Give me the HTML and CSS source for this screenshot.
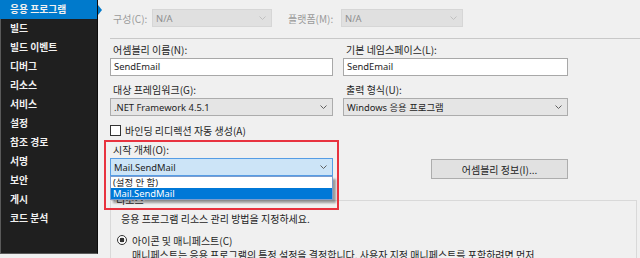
FILE: index.html
```html
<html>
<head>
  <meta charset="utf-8">
  <link rel="stylesheet" href="styles.css">
</head>
<body>
  <div class="page">
    <ul class="side-nav">
      <li class="side-nav_item side-nav_item--active">응용 프로그램</li>
      <li class="side-nav_item">빌드</li>
      <li class="side-nav_item">빌드 이벤트</li>
      <li class="side-nav_item">디버그</li>
      <li class="side-nav_item">리소스</li>
      <li class="side-nav_item">서비스</li>
      <li class="side-nav_item">설정</li>
      <li class="side-nav_item">참조 경로</li>
      <li class="side-nav_item">서명</li>
      <li class="side-nav_item">보안</li>
      <li class="side-nav_item">게시</li>
      <li class="side-nav_item">코드 분석</li>
    </ul>

    <div class="props">
      <!-- 구성 / 플랫폼 -->
      <div class="props_config">
        <span class="props_config-label">구성(C):</span>
        <div class="combo combo--disabled props_config-combo">
          <span>N/A</span>
          <svg class="combo_arrow" width="7" height="4" viewBox="0 0 7 4"><polyline points="0.5,0.5 3.5,3.5 6.5,0.5" fill="none" stroke="#c0c0c0" stroke-width="1"/></svg>
        </div>
        <span class="props_config-label props_config-label--platform">플랫폼(M):</span>
        <div class="combo combo--disabled props_config-combo props_config-combo--platform">
          <span>N/A</span>
          <svg class="combo_arrow" width="7" height="4" viewBox="0 0 7 4"><polyline points="0.5,0.5 3.5,3.5 6.5,0.5" fill="none" stroke="#c0c0c0" stroke-width="1"/></svg>
        </div>
      </div>
      <div class="props_separator"></div>

      <div class="props_row props_row--first">
        <div class="field">
          <div class="field_label">어셈블리 이름(N):</div>
          <div class="textbox">SendEmail</div>
        </div>
        <div class="field field--wide">
          <div class="field_label">기본 네임스페이스(L):</div>
          <div class="textbox">SendEmail</div>
        </div>
      </div>

      <div class="props_row">
        <div class="field">
          <div class="field_label">대상 프레임워크(G):</div>
          <div class="combo">
            <span>.NET Framework 4.5.1</span>
            <svg class="combo_arrow" width="7" height="4" viewBox="0 0 7 4"><polyline points="0.5,0.5 3.5,3.5 6.5,0.5" fill="none" stroke="#606060" stroke-width="1"/></svg>
          </div>
        </div>
        <div class="field field--wide">
          <div class="field_label">출력 형식(U):</div>
          <div class="combo">
            <span>Windows 응용 프로그램</span>
            <svg class="combo_arrow" width="7" height="4" viewBox="0 0 7 4"><polyline points="0.5,0.5 3.5,3.5 6.5,0.5" fill="none" stroke="#606060" stroke-width="1"/></svg>
          </div>
        </div>
      </div>

      <label class="check">
        <span class="check_box"></span>
        <span>바인딩 리디렉션 자동 생성(A)</span>
      </label>

      <div class="props_row props_row--startup">
        <div class="field field--startup">
          <div class="field_label">시작 개체(O):</div>
          <div class="combo combo--focused">
            <span>Mail.SendMail</span>
            <svg class="combo_arrow" width="7" height="4" viewBox="0 0 7 4"><polyline points="0.5,0.5 3.5,3.5 6.5,0.5" fill="none" stroke="#606060" stroke-width="1"/></svg>
            <ul class="dropdown">
              <li class="dropdown_item">(설정 안 함)</li>
              <li class="dropdown_item dropdown_item--selected">Mail.SendMail</li>
            </ul>
          </div>
          <div class="highlight"></div>
        </div>
        <div class="props_button-col">
          <button class="button">어셈블리 정보(I)...</button>
        </div>
      </div>

      <fieldset class="group">
        <legend class="group_title">리소스</legend>
        <p class="group_desc">응용 프로그램 리소스 관리 방법을 지정하세요.</p>
        <label class="radio">
          <span class="radio_dot"></span>
          <span>아이콘 및 매니페스트(C)</span>
        </label>
        <p class="group_note">매니페스트는 응용 프로그램의 특정 설정을 결정합니다. 사용자 지정 매니페스트를 포함하려면 먼저</p>
      </fieldset>
    </div>
  </div>
</body>
</html>
```

FILE: styles.css
```css
* {
  box-sizing: border-box;
}
body {
  margin: 0;
  width: 640px;
  height: 258px;
  overflow: hidden;
  background: #f0f0f0;
  font-family: "Noto Sans CJK KR", sans-serif;
  font-size: 10px;
  color: #1e1e1e;
}
.page {
  display: flex;
  align-items: flex-start;
  height: 258px;
}

/* 왼쪽 탭 목록 */
.side-nav {
  margin: 0;
  padding: 0;
  list-style: none;
  width: 98px;
  height: 254px;
  flex-shrink: 0;
  background: #1f1f1f;
  border-left: 1px solid #5a5a5a;
  border-bottom: 1px solid #5a5a5a;
  border-right: 1px solid #0c0c0c;
}
.side-nav_item {
  height: 19px;
  line-height: 19px;
  padding-left: 9px;
  color: #f1f1f1;
  font-size: 9.8px;
  font-weight: bold;
  white-space: nowrap;
}
.side-nav_item--active {
  position: relative;
  background: #007acc;
  margin-left: -1px;
  padding-left: 10px;
}
.side-nav_item--active::after {
  content: "";
  position: absolute;
  right: -5px;
  top: 5px;
  border-left: 4px solid #007acc;
  border-top: 5px solid transparent;
  border-bottom: 5px solid transparent;
}

/* 속성 페이지 */
.props {
  flex: 1;
  height: 258px;
  overflow: hidden;
  padding: 9px 0 0 12px;
}
.props_config {
  display: flex;
  align-items: center;
  height: 18px;
  padding-left: 3px;
}
.props_config-label {
  width: 39px;
  color: #9a9a9a;
  white-space: nowrap;
}
.props_config-label--platform {
  width: 53px;
  margin-left: 16px;
}
.props_config-combo {
  width: 120px;
}
.props_config-combo--platform {
  width: 122px;
}
.props_separator {
  margin-top: 11px;
  height: 1px;
  background: #c8c8c8;
}
.props_row {
  display: flex;
  gap: 10px;
  margin-top: 5px;
}
.props_row--first {
  margin-top: 2px;
}
.props_row--startup {
  margin-top: 1px;
  gap: 0;
}
.props_button-col {
  padding-top: 18px;
  margin-left: 98px;
}

.field {
  position: relative;
  width: 223px;
}
.field--wide {
  width: 225px;
}
.field_label {
  height: 17px;
  line-height: 17px;
  padding-left: 3px;
  white-space: nowrap;
}

.textbox {
  height: 18px;
  line-height: 16px;
  padding-left: 3px;
  background: #ffffff;
  border: 1px solid #a8a8a8;
  font-family: "Noto Sans", sans-serif;
  font-size: 9.4px;
}

.combo {
  position: relative;
  display: flex;
  align-items: center;
  justify-content: space-between;
  height: 18px;
  padding: 0 5px 0 3px;
  background: #e5e5e5;
  border: 1px solid #acacac;
  font-family: "Noto Sans", "Noto Sans CJK KR", sans-serif;
  font-size: 9.4px;
  white-space: nowrap;
}
.combo--disabled {
  background: #e0e0e0;
  border-color: #d6d6d6;
  color: #8e8e8e;
}
.combo--focused {
  background: #cce4f7;
  border-color: #569de5;
}
.combo_arrow {
  flex-shrink: 0;
}

.dropdown {
  position: absolute;
  top: 17px;
  left: -1px;
  width: 223px;
  margin: 0;
  padding: 0;
  list-style: none;
  background: #ffffff;
  border: 1px solid #7a9ccf;
  box-shadow: 3px 3px 2px rgba(0, 0, 0, 0.35);
  z-index: 2;
}
.dropdown_item {
  height: 11px;
  line-height: 11px;
  padding-left: 2px;
  font-family: "Noto Sans", "Noto Sans CJK KR", sans-serif;
  font-size: 9.4px;
}
.dropdown_item--selected {
  background: #0078d7;
  color: #ffffff;
}

/* 강조 표시 */
.highlight {
  position: absolute;
  left: -6px;
  right: -6px;
  top: -1px;
  bottom: -31px;
  border: 2px solid #e8323e;
  z-index: 3;
}

.check {
  display: flex;
  align-items: center;
  gap: 4px;
  height: 20px;
  margin-top: 4px;
}
.check_box {
  width: 11px;
  height: 11px;
  background: #ffffff;
  border: 1px solid #333333;
}

.button {
  width: 137px;
  height: 20px;
  padding: 0;
  background: #e1e1e1;
  border: 1px solid #adadad;
  font-family: "Noto Sans CJK KR", sans-serif;
  font-size: 10px;
  color: #1e1e1e;
}

.group {
  position: relative;
  margin: 16px 3px 0 0;
  padding: 0 0 0 10px;
  height: 70px;
  border: 1px solid #d9d9d9;
}
.group_title {
  margin-left: -6px;
  padding: 0 1px;
  line-height: 10px;
}
.group_desc {
  margin: 7px 0 0 0;
  line-height: 14px;
}
.radio {
  display: flex;
  align-items: center;
  gap: 5px;
  margin: 7px 0 0 -4px;
  height: 14px;
}
.radio_dot {
  width: 10px;
  height: 10px;
  border: 1px solid #333333;
  border-radius: 50%;
  background: radial-gradient(circle, #333333 0 2.2px, #ffffff 2.6px);
}
.group_note {
  margin: 1px 0 0 11px;
  line-height: 14px;
  white-space: nowrap;
}
```
